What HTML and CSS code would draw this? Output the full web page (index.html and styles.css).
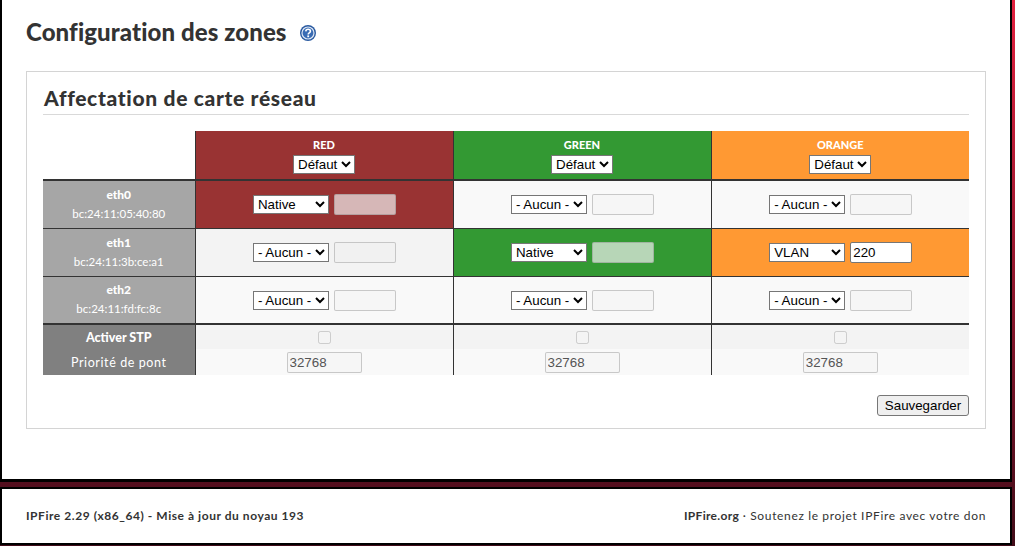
FILE: index.html
```html
<!DOCTYPE html>
<html lang="fr">
<head>
<meta charset="utf-8">
<title>Configuration des zones</title>
<link rel="stylesheet" href="styles.css">
</head>
<body>
<main class="page">
  <header class="page-head">
    <h1>Configuration des zones</h1>
    <svg class="help" width="16" height="16" viewBox="0 0 16 16" aria-hidden="true">
      <circle cx="8" cy="8" r="8" fill="#2a5aa0"/>
      <circle cx="8" cy="8" r="6" fill="#3a6cb4" stroke="#dfe8f5" stroke-width="1.200"/>
      <path d="M5.800 6.400C5.900 5 7 4.300 8.100 4.300c1.400 0 2.300.8 2.300 2 0 1.700-2.200 1.500-2.200 3.100" fill="none" stroke="#fff" stroke-width="1.600"/>
      <rect x="7.300" y="10.400" width="1.800" height="1.800" fill="#fff"/>
    </svg>
  </header>
  <section class="box">
    <h2>Affectation de carte réseau</h2>
    <table class="zones">
      <colgroup><col class="c0"><col class="cz"><col class="cz"><col class="cz"></colgroup>
      <thead>
        <tr>
          <th class="corner"></th>
          <th class="red"><div class="zn">RED</div><select><option>Défaut</option></select></th>
          <th class="green"><div class="zn">GREEN</div><select><option>Défaut</option></select></th>
          <th class="orange"><div class="zn">ORANGE</div><select><option>Défaut</option></select></th>
        </tr>
      </thead>
      <tbody>
        <tr class="nic first">
          <th class="nicname"><b>eth0</b><span>bc:24:11:05:40:80</span></th>
          <td class="red"><select class="mode"><option>Native</option></select> <input class="vlan" disabled></td>
          <td class="odd"><select class="mode"><option>- Aucun -</option></select> <input class="vlan" disabled></td>
          <td class="odd"><select class="mode"><option>- Aucun -</option></select> <input class="vlan" disabled></td>
        </tr>
        <tr class="nic">
          <th class="nicname"><b>eth1</b><span>bc:24:11:3b:ce:a1</span></th>
          <td class="even"><select class="mode"><option>- Aucun -</option></select> <input class="vlan" disabled></td>
          <td class="green"><select class="mode"><option>Native</option></select> <input class="vlan" disabled></td>
          <td class="orange"><select class="mode"><option>VLAN</option></select> <input class="vlan" value="220"></td>
        </tr>
        <tr class="nic last">
          <th class="nicname"><b>eth2</b><span>bc:24:11:fd:fc:8c</span></th>
          <td class="odd"><select class="mode"><option>- Aucun -</option></select> <input class="vlan" disabled></td>
          <td class="odd"><select class="mode"><option>- Aucun -</option></select> <input class="vlan" disabled></td>
          <td class="odd"><select class="mode"><option>- Aucun -</option></select> <input class="vlan" disabled></td>
        </tr>
        <tr class="stp first">
          <th class="opt"><b>Activer STP</b></th>
          <td class="even"><input type="checkbox" class="chk" disabled></td>
          <td class="even"><input type="checkbox" class="chk" disabled></td>
          <td class="even"><input type="checkbox" class="chk" disabled></td>
        </tr>
        <tr class="prio">
          <th class="opt"><span>Priorité de pont</span></th>
          <td class="odd"><input class="num" value="32768" disabled></td>
          <td class="odd"><input class="num" value="32768" disabled></td>
          <td class="odd"><input class="num" value="32768" disabled></td>
        </tr>
      </tbody>
    </table>
    <div class="actions"><button type="button">Sauvegarder</button></div>
  </section>
</main>
<footer class="foot">
  <strong class="ver">IPFire 2.29 (x86_64) - Mise à jour du noyau 193</strong>
  <span class="promo"><strong>IPFire.org</strong> · Soutenez le projet IPFire avec votre don</span>
</footer>
</body>
</html>
```
FILE: styles.css
```css
* { box-sizing: border-box; }
html, body { margin: 0; height: 546px; overflow: hidden; }
body {
  background: linear-gradient(to bottom, #e2213f 0, #6a1124 75%, #420c19 100%);
  font-family: "Lato", "Noto Sans", sans-serif;
  color: #333;
  padding-right: 3px;
  display: flex;
  flex-direction: column;
  gap: 5px;
}
.page {
  height: 482px;
  background: #fff;
  border: solid #000;
  border-width: 0 2px 3px 2px;
  padding: 0 24px;
}
.page-head { display: flex; align-items: center; height: 65px; padding-bottom: 2px; gap: 13px; }
h1 { margin: 0; font-size: 24px; font-weight: 900; letter-spacing: 0.1px; color: #333; }
.help { margin-top: 2px; }
.box {
  height: 358px;
  margin-top: 6px;
  border: 1px solid #d4d4d4;
  padding: 0 16px;
}
h2 {
  margin: 14px 0 16px;
  height: 29px;
  font-size: 21px;
  line-height: 24px;
  font-weight: 900;
  letter-spacing: 0.66px;
  padding-left: 1px;
  color: #333;
  border-bottom: 1px solid #d9d9d9;
}
.zones { width: 926px; border-collapse: collapse; table-layout: fixed; }
.c0 { width: 152px; }
.cz { width: 258px; }
.zones th, .zones td { padding: 0; text-align: center; }
thead tr { height: 49px; }
thead th { vertical-align: top; padding-top: 7px !important; border-left: 1px solid #333; }
thead th.corner { border-left: 0; }
.zn { font-size: 11px; line-height: 14px; font-weight: 900; color: #fff; margin-bottom: 1px; }
.red { background: #993333; }
.green { background: #339933; }
.orange { background: #ff9933; }
.odd { background: #f9f9f9; }
.even { background: #f3f3f3; }
tr.nic { height: 48px; border-top: 1px solid #333; }
tr.first { border-top: 2px solid #333; }
tr.last td { padding-top: 1px; }
tbody td { border-left: 1px solid #333; }
.zones .nicname { background: #a6a6a6; color: #fff; font-size: 11.500px; font-weight: 400; padding-bottom: 2px; }
.nicname b { display: block; line-height: 19px; margin-top: 1px; font-weight: 900; font-size: 12px; }
.nicname span { display: block; line-height: 19px; }
.opt { background: #808080; color: #fff; font-size: 12.500px; font-weight: 400; }
.opt b { font-weight: 900; }
.opt span { letter-spacing: 0.6px; }
tr.stp { height: 25px; }
tr.prio { height: 26px; }
select, input, button { font-family: "Liberation Sans", Arial, sans-serif; font-size: 13.333px; color: #000; }
select { height: 19px; background: #fff; border: 1px solid #767676; border-radius: 0; padding: 0; }
select.mode { width: 76px; height: 19px; margin-left: 1px; vertical-align: 1px; }
thead select { width: 62px; }
input.vlan { width: 62px; height: 21px; border: 1px solid #767676; border-radius: 2px; padding: 1px 2px; background: #fff; margin-left: 1px; vertical-align: top; }
input.vlan:disabled { background: rgba(239, 239, 239, 0.7); border-color: rgba(118, 118, 118, 0.35); }
.odd input.vlan:disabled, .even input.vlan:disabled { background: rgba(239, 239, 239, 0.3); }
td { vertical-align: middle; }
.chk { width: 13px; height: 13px; margin: 1px 0 0; }
input.num { width: 75px; height: 21px; border: 1px solid rgba(118, 118, 118, 0.35); border-radius: 2px; padding: 1px 2px; background: rgba(239, 239, 239, 0.3); color: #545454; display: block; margin: 1px auto 0; }
.actions { display: flex; justify-content: flex-end; margin-top: 20px; }
button { height: 21px; width: 92px; padding: 0; background: #efefef; border: 1px solid #767676; border-radius: 3px; }
.foot {
  height: 58px;
  background: #fff;
  border: 2px solid #000;
  padding: 0 24px 1px;
  display: flex;
  align-items: center;
  justify-content: space-between;
  font-size: 12px;
  color: #333;
}
.ver { font-weight: 700; letter-spacing: 0.55px; }
.promo { letter-spacing: 0.65px; }
.promo strong { font-weight: 700; letter-spacing: 0.3px; }
```
